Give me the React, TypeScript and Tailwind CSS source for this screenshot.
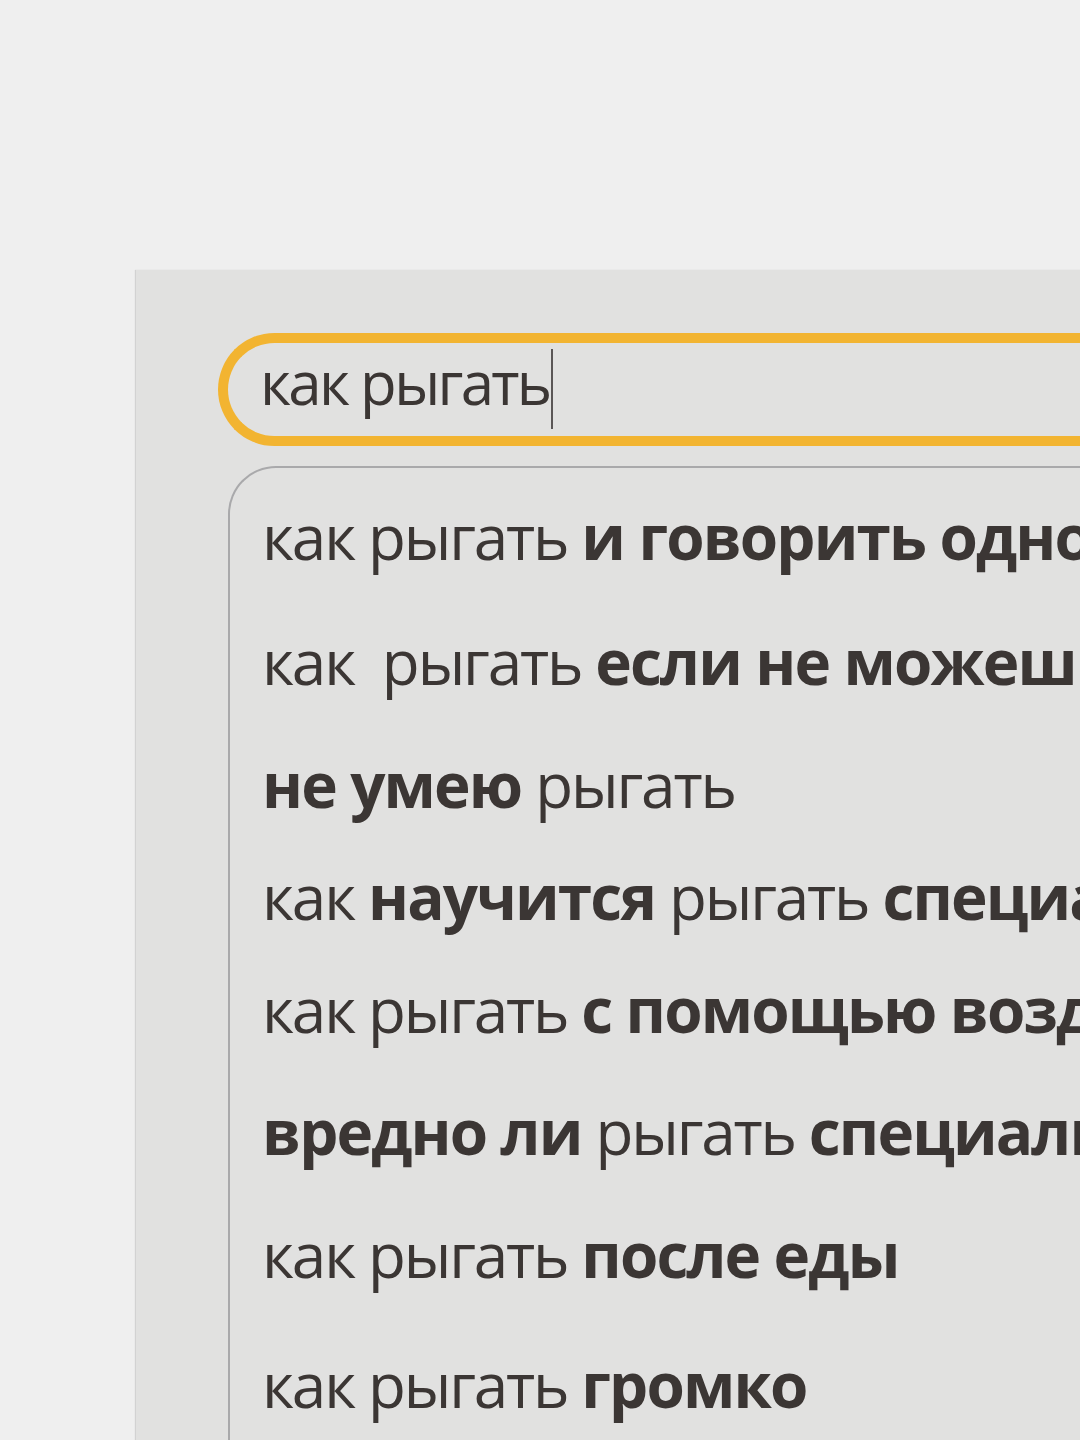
import React from "react";

type Part = {text: string; bold?: boolean};

type Suggestion = {
  id: number;
  parts: Part[];
  gap: string; // space above the row, taken from the picture
};

const suggestions: Suggestion[] = [
  {id: 1, gap: "mt-[37px]", parts: [{text: "как рыгать "}, {text: "и говорить одновременно", bold: true}]},
  {id: 2, gap: "mt-[63px]", parts: [{text: "как  рыгать "}, {text: "если не можешь", bold: true}]},
  {id: 3, gap: "mt-[61px]", parts: [{text: "не умею", bold: true}, {text: " рыгать"}]},
  {
    id: 4,
    gap: "mt-[50px]",
    parts: [{text: "как "}, {text: "научится", bold: true}, {text: " рыгать "}, {text: "специально", bold: true}],
  },
  {id: 5, gap: "mt-[51px]", parts: [{text: "как рыгать "}, {text: "с помощью воздуха", bold: true}]},
  {
    id: 6,
    gap: "mt-[60px]",
    parts: [{text: "вредно ли", bold: true}, {text: " рыгать "}, {text: "специально", bold: true}],
  },
  {id: 7, gap: "mt-[61px]", parts: [{text: "как рыгать "}, {text: "после еды", bold: true}]},
  {id: 8, gap: "mt-[68px]", parts: [{text: "как рыгать "}, {text: "громко", bold: true}]},
];

const SuggestionRow = ({suggestion}: {suggestion: Suggestion}) => (
  <div className={`${suggestion.gap} h-[62px] text-[62px] leading-none whitespace-pre`}>
    {suggestion.parts.map((part, index) => (
      <span key={index} className={part.bold ? "font-bold tracking-[-0.03em]" : "font-normal tracking-[-0.035em]"}>
        {part.text}
      </span>
    ))}
  </div>
);

export default function App() {
  return (
    <div
      className="w-[1080px] h-[1440px] overflow-hidden bg-[#efefef] pt-[270px] pl-[136px] text-[#3b3634]"
      style={{fontFamily: '"Open Sans", "Noto Sans", sans-serif'}}
    >
      <div className="h-[1200px] w-[1000px] bg-[#e1e1e0] pl-[82px] pt-[63px] shadow-[-1px_0_1px_rgba(0,0,0,0.12)]">
        {/* search field */}
        <div className="flex h-[113px] w-[900px] items-center rounded-l-full border-[10px] border-r-0 border-[#f2b431] pb-[16px] pl-[32px]">
          <span className="text-[60px] leading-[60px] font-normal tracking-[-0.045em]">как рыгать</span>
          <span className="mt-[14px] ml-[1px] h-[80px] w-[2px] bg-[#5a5656]" />
        </div>

        {/* dropdown with suggestions */}
        <div className="mt-[20px] ml-[10px] h-[1100px] w-[900px] rounded-tl-[48px] border-2 border-r-0 border-b-0 border-[#a9a9ab] pl-[32px]">
          {suggestions.map((s) => (
            <SuggestionRow key={s.id} suggestion={s} />
          ))}
        </div>
      </div>
    </div>
  );
}
